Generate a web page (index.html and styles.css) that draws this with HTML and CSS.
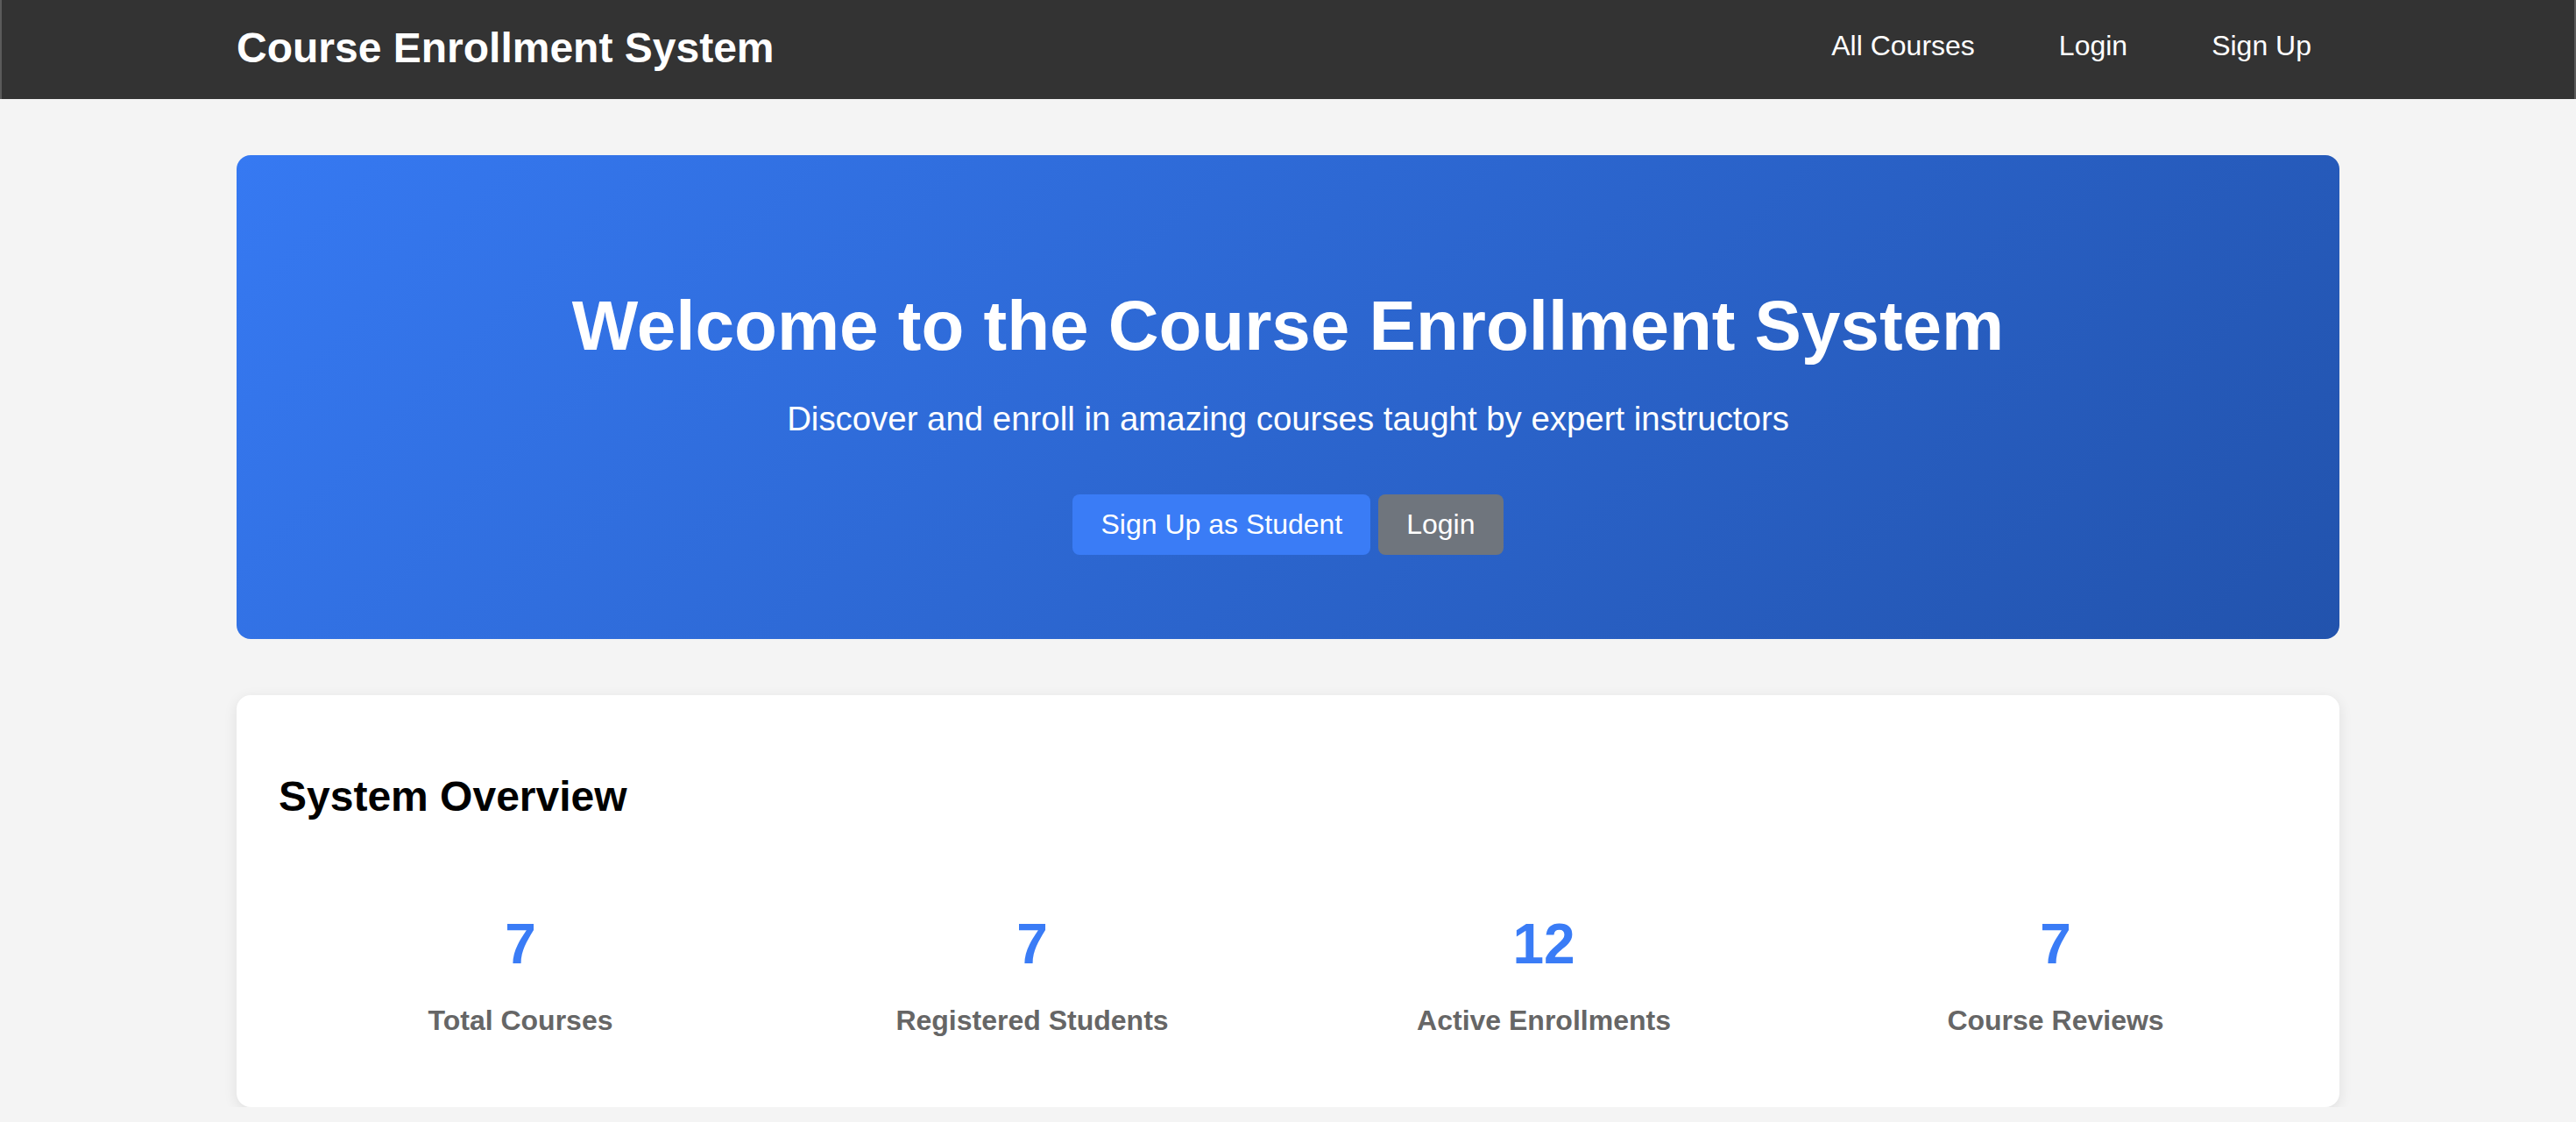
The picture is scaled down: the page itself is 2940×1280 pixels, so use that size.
FILE: index.html
```html
<!DOCTYPE html>
<html lang="en">
<head>
<meta charset="utf-8">
<title>Course Enrollment System</title>
<link rel="stylesheet" href="styles.css">
</head>
<body>
<nav class="navbar">
  <div class="nav-inner">
    <a class="brand" href="#">Course Enrollment System</a>
    <ul class="nav-links">
      <li><a href="#">All Courses</a></li>
      <li><a href="#">Login</a></li>
      <li><a href="#">Sign Up</a></li>
    </ul>
  </div>
</nav>
<main class="container">
  <section class="hero">
    <h1 class="hero-title">Welcome to the Course Enrollment System</h1>
    <p class="hero-sub">Discover and enroll in amazing courses taught by expert instructors</p>
    <div class="hero-actions">
      <a class="btn btn-primary" href="#">Sign Up as Student</a>
      <a class="btn btn-secondary" href="#">Login</a>
    </div>
  </section>
  <section class="card">
    <h2 class="card-title">System Overview</h2>
    <div class="stats">
      <div class="stat"><div class="stat-num">7</div><div class="stat-label">Total Courses</div></div>
      <div class="stat"><div class="stat-num">7</div><div class="stat-label">Registered Students</div></div>
      <div class="stat"><div class="stat-num">12</div><div class="stat-label">Active Enrollments</div></div>
      <div class="stat"><div class="stat-num">7</div><div class="stat-label">Course Reviews</div></div>
    </div>
  </section>
</main>
</body>
</html>
```
FILE: styles.css
```css
* { box-sizing: border-box; }
html, body { margin: 0; padding: 0; }
body {
  background: #f4f4f4;
  font-family: "Liberation Sans", Arial, Helvetica, sans-serif;
  color: #000;
}
a { text-decoration: none; }

.navbar {
  background: #333333;
  height: 113px;
  border-left: 2px solid #5b5b5b;
  border-right: 2px solid #5b5b5b;
}
.nav-inner {
  max-width: 2400px;
  margin: 0 auto;
  padding-top: 27px;
  display: flex;
  justify-content: space-between;
  align-items: flex-start;
}
.brand {
  color: #fff;
  font-size: 48px;
  font-weight: bold;
  line-height: normal;
}
.nav-links {
  list-style: none;
  margin: 7px 0 0;
  padding: 0;
  display: flex;
  gap: 32px;
}
.nav-links a {
  color: #fff;
  font-size: 32px;
  line-height: normal;
  padding: 0 32px;
  display: block;
}

.container {
  max-width: 2400px;
  margin: 0 auto;
  padding: 64px 0 0;
}

.hero {
  background: linear-gradient(135deg, #3679f2 0%, #2253ad 100%);
  border-radius: 16px;
  padding: 149px 32px 96px;
  text-align: center;
  color: #fff;
}
.hero-title {
  font-size: 80px;
  font-weight: bold;
  line-height: normal;
  margin: 0 0 38px;
}
.hero-sub {
  font-size: 38.4px;
  line-height: normal;
  margin: 0 0 64px;
}
.hero-actions {
  display: flex;
  justify-content: center;
  gap: 9px;
}
.btn {
  display: block;
  font-size: 32px;
  line-height: normal;
  padding: 16px 32px;
  border-radius: 8px;
  color: #fff;
}
.btn-primary { background: #3a7cf6; }
.btn-secondary { background: #6f757d; }

.card {
  margin-top: 64px;
  background: #fff;
  border-radius: 16px;
  padding: 48px;
  box-shadow: 0 4px 16px rgba(0, 0, 0, 0.09);
}
.card-title {
  font-size: 48px;
  font-weight: bold;
  line-height: normal;
  margin: 40px 0 72px;
}
.stats {
  display: grid;
  grid-template-columns: repeat(4, 1fr);
  gap: 32px;
}
.stat {
  padding: 32px;
  text-align: center;
}
.stat-num {
  font-size: 64px;
  font-weight: bold;
  line-height: normal;
  color: #3a7cf6;
  margin-bottom: 32px;
}
.stat-label {
  font-size: 32px;
  font-weight: bold;
  line-height: normal;
  color: #666;
}
```
